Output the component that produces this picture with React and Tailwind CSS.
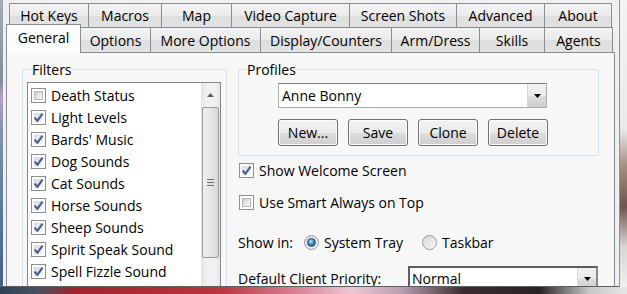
import React from 'react';

const topTabs = [
  ['Hot Keys', 80],
  ['Macros', 73],
  ['Map', 70],
  ['Video Capture', 118],
  ['Screen Shots', 107],
  ['Advanced', 88],
  ['About', 67],
];

const bottomTabs = [
  ['Options', 70],
  ['More Options', 110],
  ['Display/Counters', 131],
  ['Arm/Dress', 88],
  ['Skills', 65],
  ['Agents', 68],
];

const filters = [
  ['Death Status', false],
  ['Light Levels', true],
  ["Bards' Music", true],
  ['Dog Sounds', true],
  ['Cat Sounds', true],
  ['Horse Sounds', true],
  ['Sheep Sounds', true],
  ['Spirit Speak Sound', true],
  ['Spell Fizzle Sound', true],
  ['', true], // next row, only its box top peeks out under the window edge
];

function CheckBox({ checked }) {
  return (
    <div className="w-[15px] h-[15px] shrink-0 border border-[#8e8f8f] bg-white p-[2px]">
      <div
        className={`w-full h-full relative ${
          checked
            ? 'bg-[linear-gradient(135deg,#d6d9de,#f7f7f7)]'
            : 'bg-[linear-gradient(135deg,#c9cbcf,#eeeeee_70%,#f8f8f8)] border border-[#b9b9b9]'
        }`}
      >
        {checked && (
          <svg viewBox="0 0 9 9" className="absolute -left-[1px] -top-[1px] w-[11px] h-[11px]">
            <path d="M1.3 4.6 L3.6 7.2 L7.8 1.4" fill="none" stroke="#4c5f93" strokeWidth="1.8" />
          </svg>
        )}
      </div>
    </div>
  );
}

function Radio({ checked }) {
  return (
    <div className="w-[15px] h-[15px] shrink-0 rounded-full border border-[#9a9a9a] bg-[linear-gradient(135deg,#d5d5d5,#fbfbfb)] flex items-center justify-center">
      {checked && (
        <div className="w-[9px] h-[9px] rounded-full bg-[radial-gradient(circle_at_40%_35%,#bfe3f5,#3d8ec0_45%,#17507b)] border border-[#1d4e73]" />
      )}
    </div>
  );
}

function WinButton({ label }) {
  return (
    <div className="w-[60px] h-[27px] rounded-[3px] border border-[#707070] bg-[linear-gradient(180deg,#f2f2f2_0%,#ebebeb_50%,#dddddd_51%,#cfcfcf_100%)] shadow-[inset_0_0_0_1px_#fcfcfc] flex items-center justify-center">
      {label}
    </div>
  );
}

function DropArrow() {
  return (
    <div className="w-[19px] h-full border-l border-[#d6d6d6] bg-[linear-gradient(180deg,#f2f2f2,#ebebeb_50%,#dddddd_51%,#cfcfcf)] flex items-center justify-center">
      <svg viewBox="0 0 7 4" className="w-[7px] h-[4px]">
        <path d="M0 0 H7 L3.5 4 Z" fill="#000" />
      </svg>
    </div>
  );
}

export default function App() {
  return (
    <div className="w-[627px] h-[294px] overflow-hidden flex flex-col bg-[#d8d8d8] font-['Open_Sans',sans-serif] text-[14px] text-black">
      <div className="flex h-[287px]">
        {/* left window frame */}
        <div className="w-[3px] shrink-0 bg-[linear-gradient(180deg,#a5adb6,#7f8d9c_28%,#b9a2c6_34%,#8094ad_45%,#56789b_75%,#3f6385)]" />

        {/* dialog */}
        <div className="w-[616px] shrink-0 bg-[#f0f0f0] overflow-hidden border-b border-[#5a5f66]">
          {/* first tab row */}
          <div className="flex ml-[6px] mt-[3px] h-[24px]">
            {topTabs.map(([label, w], i) => (
              <div
                key={label}
                style={{ width: w }}
                className={`h-full shrink-0 border-t border-r border-[#898c95] bg-[linear-gradient(180deg,#f3f3f3,#ebebeb_50%,#dedede_51%,#e3e3e3)] flex items-center justify-center ${
                  i === 0 ? 'border-l' : ''
                }`}
              >
                {label}
              </div>
            ))}
          </div>

          {/* second tab row */}
          <div className="flex items-end ml-[3px] -mt-[3px] h-[28px]">
            <div className="relative z-10 w-[75px] h-[29px] -mb-px shrink-0 border-t border-l border-r border-[#898c95] bg-[#fcfcfc] flex items-center justify-center pb-[3px]">
              General
            </div>
            {bottomTabs.map(([label, w]) => (
              <div
                key={label}
                style={{ width: w }}
                className="h-[25px] shrink-0 border-t border-r border-[#898c95] bg-[linear-gradient(180deg,#f3f3f3,#ebebeb_50%,#dedede_51%,#e3e3e3)] flex items-center justify-center"
              >
                {label}
              </div>
            ))}
          </div>

          {/* tab page */}
          <div className="ml-[3px] w-[609px] h-[260px] border border-[#898c95] bg-[#f7f7f7] flex pl-[15px] pt-[7px]">
            {/* Filters */}
            <fieldset className="w-[205px] h-[260px] border border-[#d5dfe5] rounded-[3px]">
              <legend className="ml-[8px] px-[1px] leading-[19px]">Filters</legend>
              <div className="mt-[3px] ml-[4px] w-[194px] h-[240px] border border-[#828790] bg-white flex">
                <div className="flex-1 pl-[3px] pt-px">
                  {filters.map(([label, checked], i) => (
                    <div key={i} className="h-[22px] flex items-center gap-[5px] whitespace-nowrap">
                      <CheckBox checked={checked} />
                      {label && <span>{label}</span>}
                    </div>
                  ))}
                </div>
                {/* scrollbar */}
                <div className="w-[19px] shrink-0 bg-[linear-gradient(90deg,#e3e3e3,#f2f2f2_30%,#f2f2f2_70%,#e6e6e6)] flex flex-col items-center">
                  <div className="h-[24px] flex items-center justify-center">
                    <svg viewBox="0 0 7 4" className="w-[7px] h-[4px]">
                      <path d="M0 4 H7 L3.5 0 Z" fill="#606060" />
                    </svg>
                  </div>
                  <div className="w-[17px] h-[151px] rounded-[2px] border border-[#9a9a9a] bg-[linear-gradient(90deg,#f1f1f1,#e6e6e6_50%,#d8d8d8)] flex flex-col items-center justify-center gap-[2px]">
                    <div className="w-[7px] h-px bg-[#6e6e6e]" />
                    <div className="w-[7px] h-px bg-[#6e6e6e]" />
                    <div className="w-[7px] h-px bg-[#6e6e6e]" />
                  </div>
                </div>
              </div>
            </fieldset>

            {/* right column */}
            <div className="ml-[11px] flex flex-col">
              <fieldset className="w-[361px] border border-[#d5dfe5] rounded-[3px] pb-[9px]">
                <legend className="ml-[7px] px-[1px] leading-[19px]">Profiles</legend>
                <div className="mt-[4px] ml-[39px] w-[269px] h-[25px] border border-[#abadb3] border-t-[#7a7a7a] bg-white flex items-center">
                  <span className="flex-1 pl-[3px]">Anne Bonny</span>
                  <DropArrow />
                </div>
                <div className="mt-[11px] ml-[39px] flex gap-[10px]">
                  <WinButton label="New..." />
                  <WinButton label="Save" />
                  <WinButton label="Clone" />
                  <WinButton label="Delete" />
                </div>
              </fieldset>

              <div className="mt-[3px] ml-px h-[22px] flex items-center gap-[5px]">
                <CheckBox checked />
                <span>Show Welcome Screen</span>
              </div>
              <div className="mt-[10px] ml-px h-[22px] flex items-center gap-[5px]">
                <CheckBox checked={false} />
                <span>Use Smart Always on Top</span>
              </div>

              <div className="mt-[18px] h-[22px] flex items-center">
                <span className="w-[66px]">Show in:</span>
                <Radio checked />
                <span className="ml-[5px] w-[98px]">System Tray</span>
                <Radio checked={false} />
                <span className="ml-[5px]">Taskbar</span>
              </div>

              <div className="mt-[13px] flex items-center">
                <span className="w-[170px] shrink-0">Default Client Priority:</span>
                <div className="w-[190px] h-[25px] border-2 border-[#5d5d5d] border-r-[#8a8a8a] border-b-[#8a8a8a] bg-white flex items-center">
                  <span className="flex-1 pl-[2px]">Normal</span>
                  <DropArrow />
                </div>
              </div>
            </div>
          </div>
        </div>

        {/* right glass edge */}
        <div className="flex-1 border-l border-[#8d9296] bg-[linear-gradient(180deg,#f1f3f5,#e8eaec_45%,#a48d82_58%,#6f554e_72%,#d8d6d4_86%,#f0f0f0)]" />
      </div>

      {/* desktop below the window */}
      <div className="flex-1 bg-[linear-gradient(90deg,#2f4156_0%,#4a4f63_6%,#a1232d_12%,#b9353f_35%,#d8879a_48%,#efc6d2_56%,#b7a0b0_64%,#3a2b2f_74%,#2a2326_86%,#c8c8c8_94%,#e6e6e6_100%)]" />
    </div>
  );
}
